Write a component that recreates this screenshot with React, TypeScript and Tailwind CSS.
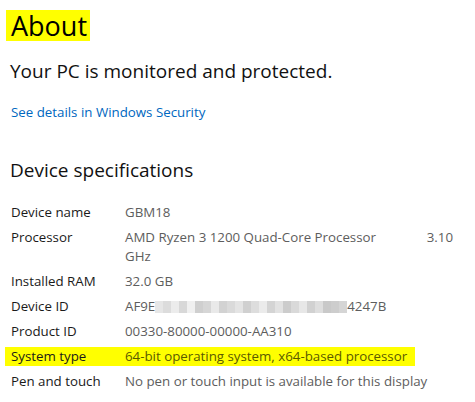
const specs: { label: string; value: string }[] = [
  { label: 'Device name', value: 'GBM18' },
  { label: 'Processor', value: '' },
  { label: 'Installed RAM', value: '32.0 GB' },
  { label: 'Device ID', value: '' },
  { label: 'Product ID', value: '00330-80000-00000-AA310' },
  { label: 'System type', value: '64-bit operating system, x64-based processor' },
  { label: 'Pen and touch', value: 'No pen or touch input is available for this display' },
];

// pixelated blur blocks over the device id
const blurBlocks = [
  '#e6e6e6', '#dcdcdc', '#ececec', '#d8d8d8', '#f0f0f0', '#cfcfcf', '#d6d6d6', '#e9e9e9',
  '#d2d2d2', '#dadada', '#e4e4e4', '#d0d0d0', '#dddddd', '#ebebeb', '#d4d4d4', '#e2e2e2',
  '#cccccc', '#d9d9d9', '#e7e7e7', '#d1d1d1', '#dedede', '#c9c9c9', '#cdcdcd', '#d5d5d5',
];

const DeviceId = () => (
  <div className="flex items-center">
    <span>AF9E</span>
    <div className="flex h-[12px]">
      {blurBlocks.map((c, i) => (
        <div key={i} className="h-full w-[8px]" style={{ backgroundColor: c }} />
      ))}
    </div>
    <span>4247B</span>
  </div>
);

const Processor = () => (
  <div className="w-[328px]">
    <div className="flex justify-between">
      <span>AMD Ryzen 3 1200 Quad-Core Processor</span>
      <span>3.10</span>
    </div>
    <div>GHz</div>
  </div>
);

const App = () => {
  return (
    <div
      className="w-[475px] h-[402px] bg-white overflow-hidden pt-[10px]"
      style={{ fontFamily: '"Segoe UI", "Open Sans", "Noto Sans", sans-serif' }}
    >
      <div className="ml-[6px] inline-block bg-[#ffff00] pl-[5px] pr-[3px] text-[27px] leading-[31px] text-black">
        About
      </div>
      <div className="ml-[10px] mt-[15px] text-[19px] leading-[28px] text-[#111]">
        Your PC is monitored and protected.
      </div>
      <div className="ml-[11px] mt-[18px] text-[13.3px] leading-[18px] text-[#0067c0]">
        See details in Windows Security
      </div>
      <div className="ml-[10px] mt-[35px] text-[19px] leading-[28px] text-[#111]">
        Device specifications
      </div>
      <div className="mt-[19px] flex flex-col gap-[6px] text-[13.3px] leading-[19px]">
        {specs.map((s) => {
          const highlight = s.label === 'System type';
          return (
            <div
              key={s.label}
              className={`flex ml-[5px] pl-[6px] ${highlight ? 'bg-[#ffff00] w-[410px]' : ''}`}
            >
              <div className="w-[114px] shrink-0 text-[#1a1a1a]">{s.label}</div>
              <div className={highlight ? 'text-[#5a5a00]' : 'text-[#5d5d5d]'}>
                {s.label === 'Processor' ? <Processor /> : s.label === 'Device ID' ? <DeviceId /> : s.value}
              </div>
            </div>
          );
        })}
      </div>
    </div>
  );
};

export default App;
